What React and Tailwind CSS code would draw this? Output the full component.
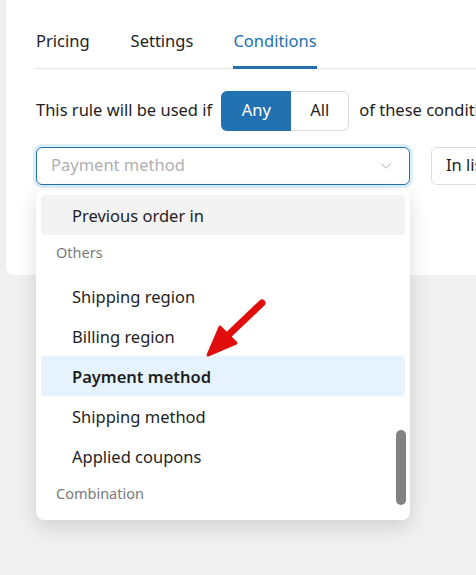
import React from 'react';
import { ChevronDown } from 'lucide-react';

const groups = [
  { items: [{ label: 'Previous order in', state: 'hover' }] },
  {
    title: 'Others',
    items: [
      { label: 'Shipping region' },
      { label: 'Billing region' },
      { label: 'Payment method', state: 'selected' },
      { label: 'Shipping method' },
      { label: 'Applied coupons' },
    ],
  },
  { title: 'Combination', items: [] },
];

const Option = ({ label, state }) => (
  <div
    className={`h-[40px] flex items-center pl-[31px] rounded-[4px] text-[16.5px] text-[#1e1e1e] ${
      state === 'hover' ? 'bg-[#f3f3f3]' : ''
    } ${state === 'selected' ? 'bg-[#e6f3fc] font-semibold' : ''}`}
  >
    <span className="pt-[3px]">{label}</span>
  </div>
);

const App = () => {
  return (
    <div
      className="min-h-screen bg-[#f0f0f1] pl-[6px] relative overflow-hidden"
      style={{ fontFamily: '"Segoe UI", "Noto Sans", "Open Sans", sans-serif' }}
    >
      {/* Card */}
      <div className="bg-white rounded-bl-[8px] h-[275px] pl-[30px] pt-[24px]">
        {/* Tabs */}
        <div className="flex border-b border-[#e4e4e4] text-[16.5px] text-[#1e1e1e]">
          <div className="pb-[14px] pt-[5px] pr-[41px]">Pricing</div>
          <div className="pb-[14px] pt-[5px] pr-[40px]">Settings</div>
          <div className="pb-[11px] pt-[5px] text-[#2271b1] border-b-[3px] border-[#2271b1] -mb-px">Conditions</div>
        </div>

        {/* Rule match */}
        <div className="flex items-center mt-[22px] text-[16.5px] text-[#1e1e1e] whitespace-nowrap">
          <span>This rule will be used if</span>
          <div className="flex ml-[9px] h-[40px]">
            <div className="w-[70px] flex items-center justify-center bg-[#2271b1] text-white rounded-l-[6px]">Any</div>
            <div className="w-[58px] flex items-center justify-center border border-l-0 border-[#dcdcde] rounded-r-[6px]">All</div>
          </div>
          <span className="ml-[10px]">of these conditions are met</span>
        </div>

        {/* Selects */}
        <div className="flex items-center mt-[16px] gap-[21px] whitespace-nowrap">
          <div className="w-[374px] h-[38px] shrink-0 flex items-center justify-between pl-[14px] pr-[14px] rounded-[6px] border-[1.5px] border-[#2271b1] ring-[3px] ring-[#dbeefb] text-[16.5px] text-[#b0b0b0]">
            <span>Payment method</span>
            <ChevronDown size={18} strokeWidth={1.2} className="text-[#a0a0a0]" />
          </div>
          <div className="w-[200px] h-[38px] shrink-0 flex items-center pl-[14px] rounded-[6px] border border-[#dcdcde] text-[16.5px] text-[#1e1e1e]">
            In list
          </div>
        </div>
      </div>

      {/* Dropdown menu */}
      <div className="absolute left-[36px] top-[190px] w-[374px] h-[330px] bg-white rounded-[8px] shadow-[0_6px_20px_rgba(0,0,0,0.14)] p-[5px] overflow-hidden">
        {groups.map((group, gi) => (
          <div key={gi}>
            {group.title && (
              <div className="h-[41px] pl-[15px] pt-[7px] text-[14.5px] text-[#7a7a7a]">{group.title}</div>
            )}
            {group.items.map((item) => (
              <Option key={item.label} {...item} />
            ))}
          </div>
        ))}
        {/* Scrollbar */}
        <div className="absolute right-[4px] top-[240px] w-[10px] h-[75px] rounded-full bg-[#828282]" />
      </div>

      {/* Annotation arrow */}
      <svg className="absolute left-[200px] top-[295px]" width="70" height="66" viewBox="0 0 70 66">
        <path d="M62 8 L22 46" stroke="#e00d0d" strokeWidth="7" strokeLinecap="round" fill="none" />
        <path d="M8 60 L20 32 L36 48 Z" fill="#e00d0d" stroke="#e00d0d" strokeWidth="3" strokeLinejoin="round" />
      </svg>
    </div>
  );
};

export default App;
